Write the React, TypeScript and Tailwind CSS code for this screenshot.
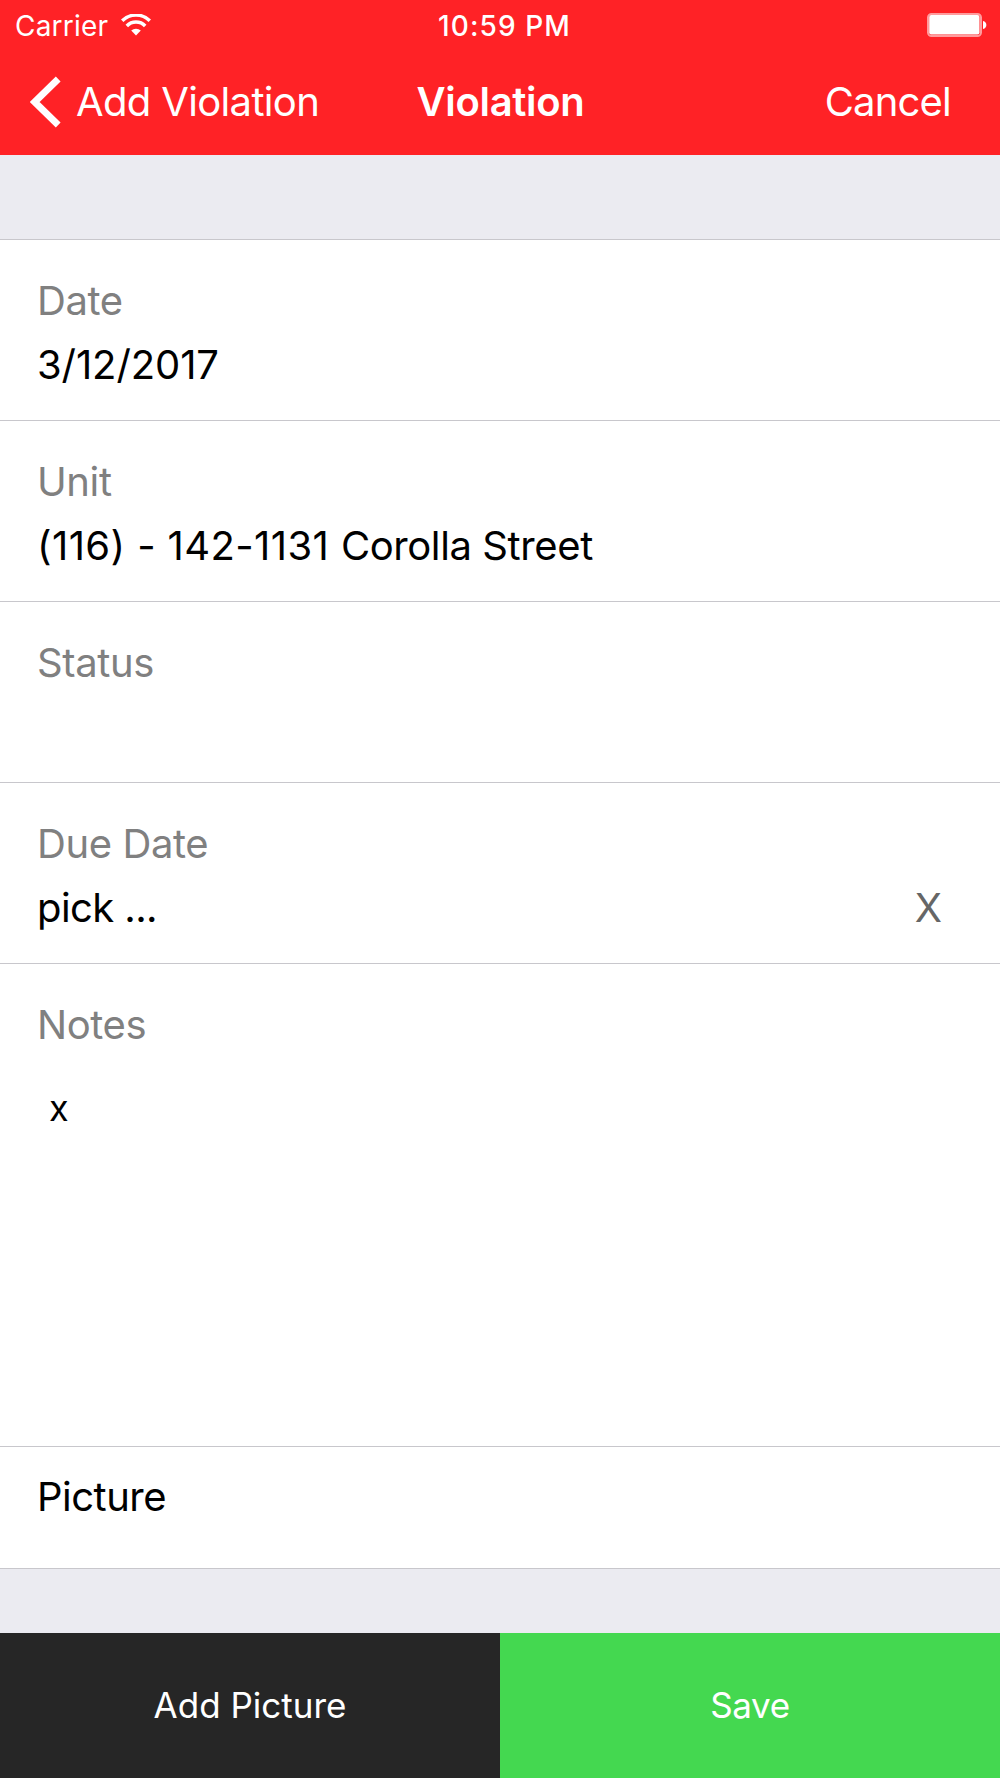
import { useState } from 'react';
import type { ReactNode } from 'react';
import clsx from 'clsx';

function WifiIcon() {
  return (
    <svg width="30" height="22" viewBox="0 0 30 22" fill="none" stroke="#ffffff">
      <path d="M1.2 6.8A19.5 19.5 0 0 1 28.8 6.8" strokeWidth="3.5" />
      <path d="M5.8 12A12.7 12.7 0 0 1 24.2 12" strokeWidth="3.5" />
      <path d="M15 21.4L10.2 16.6A7.2 7.2 0 0 1 19.8 16.6Z" fill="#ffffff" stroke="none" />
    </svg>
  );
}

function BatteryIcon() {
  return (
    <svg width="60" height="24" viewBox="0 0 60 24" fill="none">
      <rect x="1" y="1" width="53" height="22" rx="3.5" stroke="#ffffff" strokeOpacity="0.55" strokeWidth="2" />
      <rect x="2.2" y="2" width="50.3" height="19.6" rx="2" fill="#ffffff" />
      <path d="M56 8C60.5 8.8 60.5 15.2 56 16Z" fill="#ffffff" />
    </svg>
  );
}

function BackChevron() {
  return (
    <svg width="32" height="52" viewBox="0 0 32 52" fill="none">
      <path d="M28.2 3L4.7 26L28.2 49" stroke="#ffffff" strokeWidth="6.8" />
    </svg>
  );
}

interface FieldProps {
  label: string;
  children?: ReactNode;
  className?: string;
}

function Field({ label, children, className }: FieldProps) {
  return (
    <div className={clsx('border-b border-[#c8c7cc] pt-[29px] pl-[37px] text-[40px] leading-[64px]', className)}>
      <div className="tracking-[-0.4px] text-[#808080]">{label}</div>
      {children}
    </div>
  );
}

export default function App() {
  const [dueDate, setDueDate] = useState('pick ...');

  return (
    <div className="flex h-[1778px] w-[1000px] flex-col overflow-hidden bg-[#ebebf1] font-['Inter',sans-serif] text-black">
      {/* Status bar + nav bar */}
      <header className="h-[155px] shrink-0 bg-[#ff2226] text-white">
        <div className="grid h-[50px] grid-cols-3 items-center text-[28px]">
          <div className="flex items-center pl-[15px]">
            <span className="w-[106px] pt-px tracking-[0.2px]">Carrier</span>
            <WifiIcon />
          </div>
          <span className="pt-px pl-[9px] text-center font-medium tracking-[1.1px]">10:59 PM</span>
          <div className="flex justify-end pr-[13px]">
            <BatteryIcon />
          </div>
        </div>
        <div className="grid h-[104px] grid-cols-3 items-center text-[40px]">
          <button className="flex items-center pl-[30px] whitespace-nowrap">
            <BackChevron />
            <span className="ml-[14px] tracking-[-0.65px]">Add Violation</span>
          </button>
          <h1 className="pl-px text-center font-semibold tracking-[-0.3px]">Violation</h1>
          <button className="pr-[49px] text-right tracking-[-0.8px]">Cancel</button>
        </div>
      </header>

      {/* Form */}
      <main className="mt-[84px] border-t border-[#c8c7cc] bg-white">
        <Field label="Date" className="h-[181px]">
          <div className="tracking-[-0.1px]">3/12/2017</div>
        </Field>
        <Field label="Unit" className="h-[181px]">
          <div className="tracking-[-0.4px]">
            <span className="tracking-[0.4px]">(116) - 142-1131 </span>
            Corolla Street
          </div>
        </Field>
        <Field label="Status" className="h-[181px]" />
        <Field label="Due Date" className="h-[181px]">
          <div className="flex justify-between pr-[58px]">
            <span className="tracking-[-0.6px]">{dueDate}</span>
            <button className="text-[#666666]" onClick={() => setDueDate('pick ...')}>
              X
            </button>
          </div>
        </Field>
        <Field label="Notes" className="h-[483px]">
          <div className="mt-[19px] ml-[12px] text-[36px]">x</div>
        </Field>
        <div className="h-[122px] border-b border-[#c8c7cc] pt-[18px] pl-[37px] text-[40px] leading-[64px] tracking-[-0.5px]">
          Picture
        </div>
      </main>

      {/* Actions */}
      <footer className="mt-auto grid h-[145px] shrink-0 grid-cols-2 text-[35px] text-white">
        <button className="bg-[#262626]">Add Picture</button>
        <button className="bg-[#44d850] tracking-[-0.4px]">Save</button>
      </footer>
    </div>
  );
}
